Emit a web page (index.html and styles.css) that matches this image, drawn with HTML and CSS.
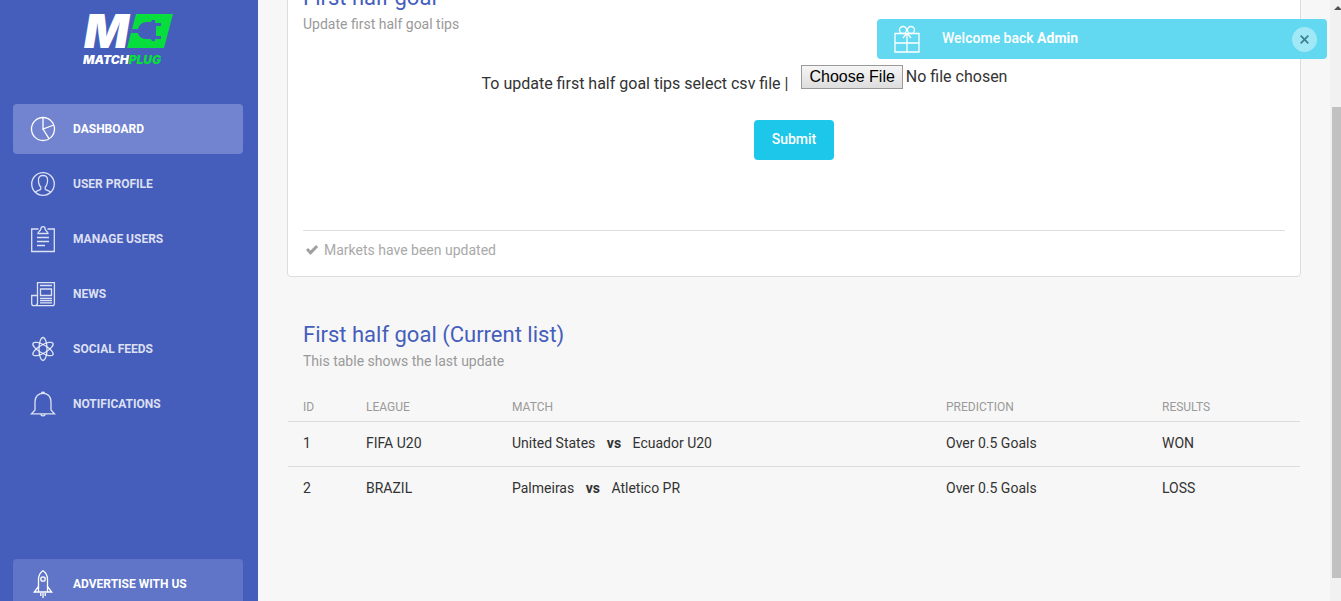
FILE: index.html
```html
<!DOCTYPE html>
<html lang="en">
<head>
  <meta charset="UTF-8">
  <meta name="viewport" content="width=device-width, initial-scale=1.0">
  <title>Matchplug Admin</title>
  <link rel="stylesheet" href="styles.css">
</head>
<body>
  <div class="wrapper">
    <nav class="sidebar">
      <a href="#" class="logo">
        <svg width="90" height="70" viewBox="0 -10 90 70" role="img" aria-label="Matchplug">
          <path fill="#07dd3c" d="M53 4H90L81 38H44Z"/>
          <path fill="#455ebc" d="M49 19H55C56 15 59 12 64 12H68L69 10H72V13H78V16H73V26H78V29H72V31H69L68 29H64C59 29 56 27 55 23H48Z"/>
          <text class="logo-m" x="1" y="38">M</text>
          <text class="logo-name" x="0" y="54">MATCH<tspan class="logo-green">PLUG</tspan></text>
        </svg>
      </a>

      <ul class="nav">
        <li>
          <a href="#" class="nav-link active">
            <svg class="icon" viewBox="0 0 28 28"><circle cx="14" cy="14" r="11.5"/><path d="M14 2.500V14L24.800 10M14 14L20 23.700"/></svg>
            Dashboard
          </a>
        </li>
        <li>
          <a href="#" class="nav-link">
            <svg class="icon" viewBox="0 0 28 28"><circle cx="14" cy="14" r="11.3"/><path d="M6.500 22.300C7.500 20.300 11.500 20.500 11.800 19V17C10.500 16 10 14.500 9.600 12.500C8.800 8 10 5.500 14 5.500S19.200 8 18.400 12.500C18 14.500 17.500 16 16.200 17V19C16.500 20.500 20.500 20.300 21.500 22.300"/></svg>
            User Profile
          </a>
        </li>
        <li>
          <a href="#" class="nav-link">
            <svg class="icon" viewBox="0 0 28 28"><path d="M9.500 4H2.700V26.500H25.300V4H18.500M9 8.500C9 6 11.500 6.500 11.800 4.200C12 .8 16 .8 16.200 4.200C16.500 6.500 19 6 19 8.500ZM8 12.500H20M8 16.500H20M8 20.500H16"/></svg>
            Manage Users
          </a>
        </li>
        <li>
          <a href="#" class="nav-link">
            <svg class="icon" viewBox="0 0 28 28"><path d="M8.500 23V2.600H25.400V23.500C25.400 25 24.500 25.700 23.500 25.700H5C3.500 25.700 2.700 24.800 2.700 23.500V15.500H8.500M8.500 23C8.500 24.800 7.500 25.700 5.700 25.700M11 5.500H23M11.500 9H22.500V15.500H11.500ZM11 18.500H23M11 20.600H23M11 22.800H23"/></svg>
            News
          </a>
        </li>
        <li>
          <a href="#" class="nav-link">
            <svg class="icon" viewBox="0 0 28 28"><ellipse cx="14" cy="14" rx="4" ry="11.500"/><ellipse cx="14" cy="14" rx="4" ry="11.500" transform="rotate(60 14 14)"/><ellipse cx="14" cy="14" rx="4" ry="11.500" transform="rotate(120 14 14)"/></svg>
            Social Feeds
          </a>
        </li>
        <li>
          <a href="#" class="nav-link">
            <svg class="icon" viewBox="0 0 28 28"><path d="M6 20V11.500C6 6.500 9.500 3.300 14 3.300S22 6.500 22 11.500V20L25.500 23.800H2.500ZM12.500 3C12.700 1.800 15.300 1.800 15.500 3M12 24C12 26.500 16 26.500 16 24"/></svg>
            Notifications
          </a>
        </li>
      </ul>

      <a href="#" class="nav-link advertise">
        <svg class="icon" viewBox="0 0 28 28"><path d="M9.500 22V9.500C9.500 5.500 11.500 2.500 14 .8C16.500 2.500 18.500 5.500 18.500 9.500V22M9.500 16.500L5.300 22H22.700L18.500 16.500M11.800 23V26M14 23V28M16.200 23V26"/><circle cx="14" cy="9" r="2.200"/></svg>
        Advertise with us
      </a>
    </nav>

    <main class="content">
      <section class="card">
        <h4 class="title">First half goal</h4>
        <p class="category">Update first half goal tips</p>
        <form class="upload">
          <div class="upload-row">
            <label for="csv">To update first half goal tips select csv file |</label>
            <input type="file" id="csv" name="csv">
          </div>
          <button type="submit" class="btn">Submit</button>
        </form>
        <div class="card-footer">
          <svg width="14" height="12" viewBox="0 0 14 12"><path fill="#a0a0a0" d="M1 6L3 4L5.500 6.500L11 1L13.200 3L5.500 11Z"/></svg>
          Markets have been updated
        </div>
      </section>

      <section class="card plain">
        <h4 class="title">First half goal (Current list)</h4>
        <p class="category">This table shows the last update</p>
        <table class="table">
          <thead>
            <tr>
              <th class="col-id">ID</th>
              <th class="col-league">League</th>
              <th>Match</th>
              <th class="col-prediction">Prediction</th>
              <th class="col-results">Results</th>
            </tr>
          </thead>
          <tbody>
            <tr>
              <td>1</td>
              <td>FIFA U20</td>
              <td>United States <b class="vs">vs</b> Ecuador U20</td>
              <td>Over 0.5 Goals</td>
              <td>WON</td>
            </tr>
            <tr>
              <td>2</td>
              <td>BRAZIL</td>
              <td>Palmeiras <b class="vs">vs</b> Atletico PR</td>
              <td>Over 0.5 Goals</td>
              <td>LOSS</td>
            </tr>
          </tbody>
        </table>
      </section>
    </main>

    <div class="scrollbar">
      <svg width="11" height="10" viewBox="0 0 11 10"><path fill="#505050" d="M4 10L8 6L12 10Z"/></svg>
      <div class="thumb"></div>
    </div>
  </div>

  <div class="alert" role="alert">
    <svg class="gift" viewBox="0 0 28 28"><path d="M2 8.500H26V27H2ZM2 18H26M14 8.500V27M14 8L10 13M14 8L18 13"/><circle cx="10" cy="5" r="3.500"/><circle cx="18" cy="5" r="3.500"/></svg>
    <span class="message">Welcome back <b>Admin</b></span>
    <button type="button" class="close" aria-label="Close">
      <svg width="9" height="9" viewBox="0 0 9 9"><path d="M.7 .7L8.300 8.300M8.300 .7L.7 8.300"/></svg>
    </button>
  </div>
</body>
</html>
```
FILE: styles.css
```css
* {
  box-sizing: border-box;
}

body {
  margin: 0;
  font-family: Roboto, "Liberation Sans", sans-serif;
  font-size: 14px;
  line-height: 20px;
  color: #333333;
  background-color: #f7f7f7;
}

.wrapper {
  display: flex;
  height: 100vh;
  overflow: hidden;
}

/* Sidebar */
.sidebar {
  display: flex;
  flex-direction: column;
  flex: none;
  width: 258px;
  padding: 0 15px 0 13px;
  background-color: #455ebc;
}

.logo {
  align-self: center;
  height: 70px;
  margin-bottom: 34px;
}

.logo svg {
  display: block;
}

.logo-m,
.logo-name {
  font-family: Inter, "Open Sans", sans-serif;
  font-weight: 900;
  font-style: italic;
  fill: #ffffff;
}

.logo-m {
  font-size: 47px;
}

.logo-name {
  font-size: 12px;
}

.logo-name .logo-green {
  fill: #07dd3c;
}

.nav {
  display: flex;
  flex-direction: column;
  gap: 5px;
  margin: 0;
  padding: 0;
  list-style: none;
}

.nav-link {
  display: flex;
  align-items: center;
  flex: none;
  gap: 16px;
  height: 50px;
  padding: 0 16px;
  border-radius: 4px;
  color: rgba(255, 255, 255, 0.82);
  font-size: 12px;
  font-weight: 700;
  text-transform: uppercase;
  text-decoration: none;
}

.nav-link.active {
  color: #ffffff;
  background-color: #7284cf;
}

.nav-link.advertise {
  margin-top: auto;
  margin-bottom: -8px;
  color: #ffffff;
  background-color: #6075c7;
}

.icon {
  width: 28px;
  height: 28px;
  fill: none;
  stroke: currentColor;
  stroke-width: 1.3;
}

/* Content */
.content {
  flex: 1;
  min-width: 0;
  padding: 0 29px;
}

.card {
  margin-top: -33px;
  padding: 15px 15px 6px;
  border: 1px solid #dddddd;
  border-radius: 4px;
  background-color: #ffffff;
}

.card.plain {
  margin-top: 27px;
  border-color: transparent;
  background-color: transparent;
}

.title {
  margin: 0;
  font-size: 22px;
  font-weight: 400;
  line-height: 30px;
  color: #455ebc;
}

.category {
  margin: 0;
  line-height: 22px;
  color: #9a9a9a;
}

.upload {
  display: flex;
  flex-direction: column;
  align-items: center;
  height: 195px;
  padding-top: 29px;
}

.upload-row {
  display: flex;
  gap: 13px;
  margin-bottom: 25px;
  font-size: 16px;
}

.upload-row label {
  padding-top: 10px;
}

.upload-row input {
  width: 305px;
  height: 30px;
  margin-top: 1px;
  font-family: inherit;
  font-size: 16px;
  color: #333333;
}

.upload-row input::file-selector-button {
  height: 24px;
  margin: 0 3px 0 0;
  padding: 0 7px;
  border: 1px solid #999999;
  border-radius: 0;
  background: linear-gradient(#f6f6f6, #dddddd);
  font-family: "Liberation Sans", sans-serif;
  font-size: 16px;
  color: #000000;
}

.btn {
  width: 80px;
  height: 40px;
  padding: 0 0 2px;
  border: 0;
  border-radius: 4px;
  background-color: #1dc7ea;
  font-family: inherit;
  font-size: 14px;
  font-weight: 500;
  color: #ffffff;
}

.card-footer {
  display: flex;
  align-items: center;
  gap: 5px;
  padding: 9px 2px 10px;
  border-top: 1px solid #dddddd;
  color: #a9a9a9;
}

/* Table */
.table {
  width: calc(100% + 30px);
  margin: 14px -15px 0;
  border-collapse: collapse;
  table-layout: fixed;
}

.table th,
.table td {
  padding: 11px 8px 13px;
  text-align: left;
}

.table th {
  padding: 11px 8px 4px;
  font-size: 12px;
  font-weight: 400;
  text-transform: uppercase;
  color: #9a9a9a;
}

.table th:first-child,
.table td:first-child {
  padding-left: 15px;
}

.table td {
  border-top: 1px solid #dddddd;
}

.col-id {
  width: 70px;
}

.col-league,
.col-results {
  width: 146px;
}

.col-prediction {
  width: 216px;
}

.vs {
  margin: 0 8px;
}

/* Scrollbar */
.scrollbar {
  flex: none;
  display: flex;
  flex-direction: column;
  width: 11px;
  padding-bottom: 23px;
  background-color: #f1f1f1;
}

.thumb {
  flex: 1;
  margin: 97px 0 0 2px;
  background-color: #c1c1c1;
}

/* Notification */
.alert {
  position: fixed;
  top: 19px;
  right: 14px;
  display: flex;
  align-items: center;
  width: 450px;
  height: 40px;
  padding: 0 10px 0 16px;
  border-radius: 4px;
  background-color: #63d8f1;
  color: #ffffff;
}

.gift {
  width: 28px;
  height: 28px;
  fill: none;
  stroke: #ffffff;
  stroke-width: 1.3;
}

.message {
  flex: 1;
  margin-left: 21px;
  padding-bottom: 2px;
  font-weight: 500;
}

.close {
  display: flex;
  align-items: center;
  justify-content: center;
  width: 25px;
  height: 25px;
  padding: 0;
  border: 0;
  border-radius: 50%;
  background-color: #a1e8f7;
}

.close svg {
  fill: none;
  stroke: #40808d;
  stroke-width: 1.8;
}
```
